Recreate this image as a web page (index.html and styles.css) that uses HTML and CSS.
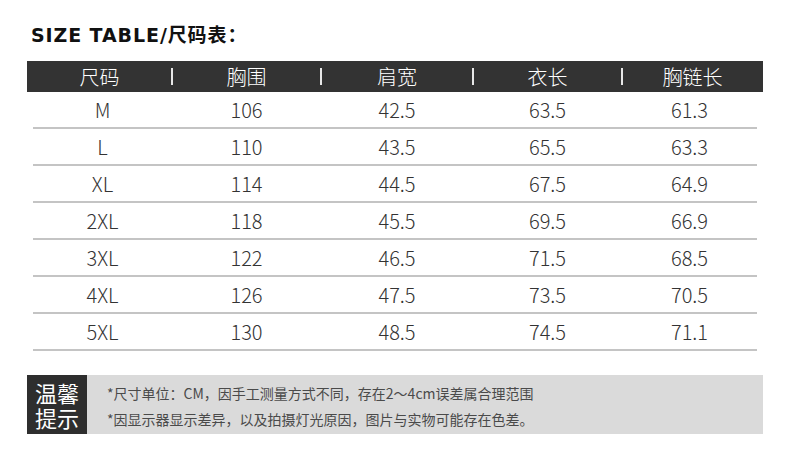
FILE: index.html
```html
<!DOCTYPE html>
<html lang="zh">
<head>
<meta charset="utf-8">
<link rel="stylesheet" href="styles.css">
</head>
<body>
<div class="page">
  <h1 class="title">SIZE TABLE/尺码表：</h1>
  <div class="table">
    <div class="head">
      <div class="hc">尺码</div><div class="sep"><i></i></div>
      <div class="hc">胸围</div><div class="sep"><i></i></div>
      <div class="hc">肩宽</div><div class="sep"><i></i></div>
      <div class="hc">衣长</div><div class="sep"><i></i></div>
      <div class="hc">胸链长</div>
    </div>
    <div class="row"><div>M</div><div>106</div><div>42.5</div><div>63.5</div><div>61.3</div></div>
    <div class="row"><div>L</div><div>110</div><div>43.5</div><div>65.5</div><div>63.3</div></div>
    <div class="row"><div>XL</div><div>114</div><div>44.5</div><div>67.5</div><div>64.9</div></div>
    <div class="row"><div>2XL</div><div>118</div><div>45.5</div><div>69.5</div><div>66.9</div></div>
    <div class="row"><div>3XL</div><div>122</div><div>46.5</div><div>71.5</div><div>68.5</div></div>
    <div class="row"><div>4XL</div><div>126</div><div>47.5</div><div>73.5</div><div>70.5</div></div>
    <div class="row"><div>5XL</div><div>130</div><div>48.5</div><div>74.5</div><div>71.1</div></div>
  </div>
  <div class="note">
    <div class="note-label">
      <div class="nl-line">温馨</div>
      <div class="nl-line">提示</div>
    </div>
    <div class="note-text">
      <p>*尺寸单位：CM，因手工测量方式不同，存在2～4cm误差属合理范围</p>
      <p>*因显示器显示差异，以及拍摄灯光原因，图片与实物可能存在色差。</p>
    </div>
  </div>
</div>
</body>
</html>
```
FILE: styles.css
```css
html, body {
  margin: 0;
  padding: 0;
  background: #ffffff;
}
.page {
  width: 736px;
  padding: 23px 27px 0 27px;
  font-family: "Noto Sans CJK SC", "Noto Sans", sans-serif;
}
.title {
  margin: 0 0 14px 4px;
  font-family: "DejaVu Sans", "Noto Sans CJK SC", sans-serif;
  font-weight: bold;
  font-size: 19px;
  line-height: 24px;
  color: #111;
  letter-spacing: 0.9px;
}
.head {
  display: grid;
  grid-template-columns: 145px 0 149px 0 152px 0 149px 0 141px;
  height: 31px;
  background: #333333;
  color: #ffffff;
  font-size: 20px;
  font-weight: 300;
  align-items: center;
}
.hc {
  text-align: center;
  line-height: 31px;
}
.sep {
  display: flex;
  justify-content: center;
}
.sep i {
  display: block;
  flex: none;
  width: 2px;
  height: 17px;
  background: #e8e8e8;
}
.row {
  display: grid;
  grid-template-columns: 139px 149px 152px 149px 135px;
  margin: 0 6px;
  height: 35px;
  border-bottom: 2px solid #c4c4c4;
  align-items: center;
  font-size: 20px;
  font-weight: 300;
  color: #333333;
}
.row > div {
  text-align: center;
  line-height: 35px;
}
.note {
  display: flex;
  margin-top: 24px;
  height: 59px;
  background: #dadada;
}
.note-label {
  width: 60px;
  flex: none;
  background: #2e2e2e;
  color: #ffffff;
  font-size: 22px;
  text-align: center;
  display: flex;
  flex-direction: column;
  justify-content: center;
}
.nl-line {
  height: 25px;
  line-height: 25px;
}
.note-text {
  padding: 5px 0 0 20px;
  font-size: 14px;
  color: #4a4a4a;
  line-height: 26px;
}
.note-text p {
  margin: 0;
  white-space: nowrap;
}
```
